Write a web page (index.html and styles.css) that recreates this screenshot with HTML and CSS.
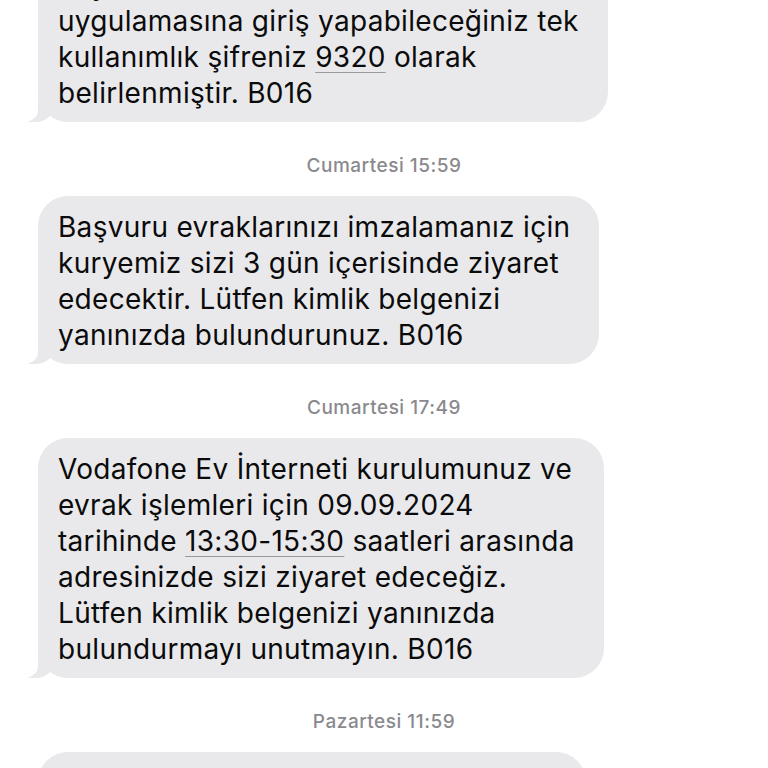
FILE: index.html
```html
<!DOCTYPE html>
<html lang="tr">
<head>
<meta charset="utf-8">
<title>Mesajlar</title>
<link rel="stylesheet" href="styles.css">
</head>
<body>
<main class="thread">
  <div class="bubble first">Sayın Abone, Vodafone Yanımda<br>uygulamasına giriş yapabileceğiniz tek<br>kullanımlık şifreniz <span class="link">9320</span> olarak<br>belirlenmiştir. B016</div>
  <div class="stamp">Cumartesi 15:59</div>
  <div class="bubble">Başvuru evraklarınızı imzalamanız için<br>kuryemiz sizi 3 gün içerisinde ziyaret<br>edecektir. Lütfen kimlik belgenizi<br>yanınızda bulundurunuz. B016</div>
  <div class="stamp">Cumartesi 17:49</div>
  <div class="bubble">Vodafone Ev İnterneti kurulumunuz ve<br>evrak işlemleri için 09.09.2024<br>tarihinde <span class="link">13:30-15:30</span> saatleri arasında<br>adresinizde sizi ziyaret edeceğiz.<br>Lütfen kimlik belgenizi yanınızda<br>bulundurmayı unutmayın. B016</div>
  <div class="stamp">Pazartesi 11:59</div>
  <div class="bubble">Değerli müşterimiz, kurulum ekibimiz<br>adresinize doğru yola çıkmıştır. B016</div>
</main>
</body>
</html>
```
FILE: styles.css
```css
html, body {
  margin: 0;
  padding: 0;
  background: #ffffff;
}
body {
  width: 768px;
  height: 768px;
  overflow: hidden;
  font-family: Inter, "Noto Sans", "Liberation Sans", sans-serif;
}
.thread {
  display: flex;
  flex-direction: column;
  align-items: flex-start;
  padding-left: 38px;
}
.bubble {
  position: relative;
  background: #e9e9eb;
  color: #0b0b0b;
  font-size: 28px;
  line-height: 36px;
  letter-spacing: 0.3px;
  padding: 13px 29px 11px 20px;
  border-radius: 30px;
  white-space: nowrap;
}
.bubble::before {
  content: "";
  position: absolute;
  left: -10px;
  bottom: 0;
  width: 26px;
  height: 26px;
  background: #e9e9eb;
  border-bottom-right-radius: 18px 16px;
}
.bubble::after {
  content: "";
  position: absolute;
  left: -30px;
  bottom: 0;
  width: 30px;
  height: 28px;
  background: #ffffff;
  border-bottom-right-radius: 14px 12px;
}
.first {
  margin-top: -46px;
}
.link {
  text-decoration: underline;
  text-decoration-color: #9a9a9e;
  text-decoration-thickness: 1px;
  text-underline-offset: 5px;
}
.stamp {
  align-self: stretch;
  margin-left: -38px;
  text-align: center;
  color: #8a8a8e;
  font-size: 19px;
  font-weight: 500;
  letter-spacing: 0.5px;
  line-height: 22px;
  margin-top: 33px;
  margin-bottom: 19px;
}
```
